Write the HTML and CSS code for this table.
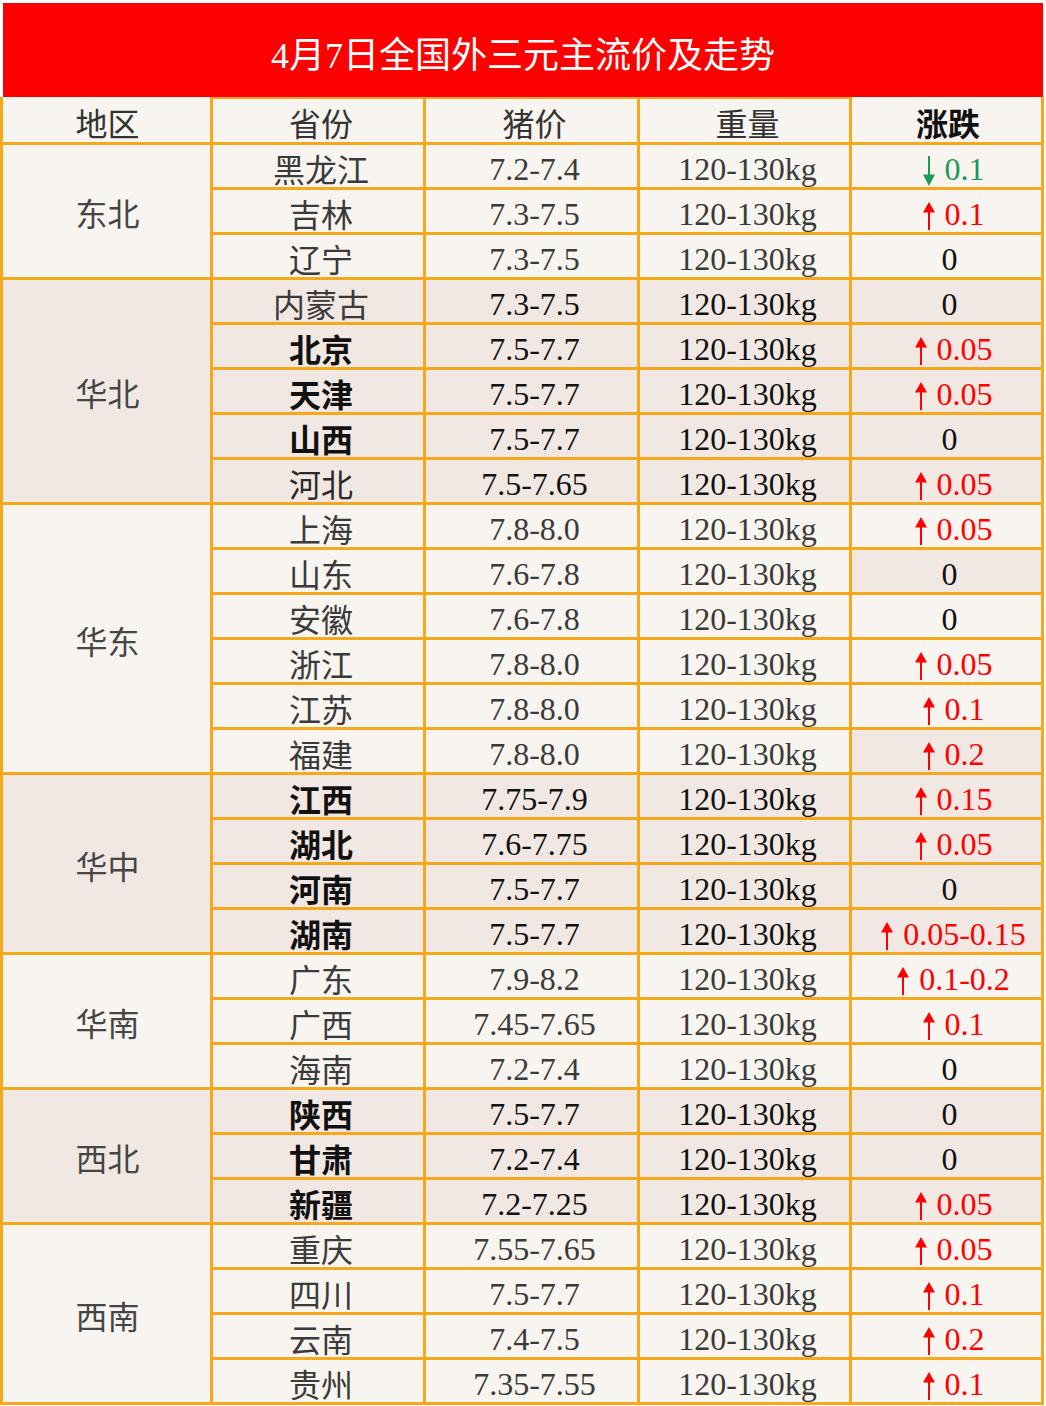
FILE: index.html
```html
<!DOCTYPE html>
<html lang="zh">
<head>
<meta charset="utf-8">
<title>4月7日全国外三元主流价及走势</title>
<link rel="stylesheet" href="styles.css">
</head>
<body>
<div class="title">4月7日全国外三元主流价及走势</div>
<div class="grid">
  <div class="c h first">地区</div>
  <div class="c h top">省份</div>
  <div class="c h top">猪价</div>
  <div class="c h top">重量</div>
  <div class="c h k b">涨跌</div>

  <div class="c region" style="grid-row: span 3">东北</div>
  <div class="c p">黑龙江</div><div class="c">7.2-7.4</div><div class="c">120-130kg</div>
  <div class="c chg dn"><svg class="arr-dn" width="12" height="30" viewBox="0 0 12 30"><path d="M5 0H7V20H5Z M0 18.5H12L6 30Z" fill="currentColor"/></svg><span>0.1</span></div>
  <div class="c p">吉林</div><div class="c">7.3-7.5</div><div class="c">120-130kg</div>
  <div class="c chg up"><svg class="arr" width="12" height="28" viewBox="0 0 12 28"><path d="M6 0L12 10.5H0Z M5 9H7V28H5Z" fill="currentColor"/></svg><span>0.1</span></div>
  <div class="c p">辽宁</div><div class="c">7.3-7.5</div><div class="c">120-130kg</div><div class="c k">0</div>

  <div class="c region d" style="grid-row: span 5">华北</div>
  <div class="c p d">内蒙古</div><div class="c d k">7.3-7.5</div><div class="c d k">120-130kg</div><div class="c d k">0</div>
  <div class="c p d k b">北京</div><div class="c d k">7.5-7.7</div><div class="c d k">120-130kg</div>
  <div class="c d chg up"><svg class="arr" width="12" height="28" viewBox="0 0 12 28"><path d="M6 0L12 10.5H0Z M5 9H7V28H5Z" fill="currentColor"/></svg><span>0.05</span></div>
  <div class="c p d k b">天津</div><div class="c d k">7.5-7.7</div><div class="c d k">120-130kg</div>
  <div class="c d chg up"><svg class="arr" width="12" height="28" viewBox="0 0 12 28"><path d="M6 0L12 10.5H0Z M5 9H7V28H5Z" fill="currentColor"/></svg><span>0.05</span></div>
  <div class="c p d k b">山西</div><div class="c d k">7.5-7.7</div><div class="c d k">120-130kg</div><div class="c d k">0</div>
  <div class="c p d k2">河北</div><div class="c d k">7.5-7.65</div><div class="c d k">120-130kg</div>
  <div class="c d chg up"><svg class="arr" width="12" height="28" viewBox="0 0 12 28"><path d="M6 0L12 10.5H0Z M5 9H7V28H5Z" fill="currentColor"/></svg><span>0.05</span></div>

  <div class="c region" style="grid-row: span 6">华东</div>
  <div class="c p">上海</div><div class="c">7.8-8.0</div><div class="c">120-130kg</div>
  <div class="c chg up"><svg class="arr" width="12" height="28" viewBox="0 0 12 28"><path d="M6 0L12 10.5H0Z M5 9H7V28H5Z" fill="currentColor"/></svg><span>0.05</span></div>
  <div class="c p">山东</div><div class="c">7.6-7.8</div><div class="c">120-130kg</div><div class="c d k">0</div>
  <div class="c p">安徽</div><div class="c">7.6-7.8</div><div class="c">120-130kg</div><div class="c k">0</div>
  <div class="c p">浙江</div><div class="c">7.8-8.0</div><div class="c">120-130kg</div>
  <div class="c chg up"><svg class="arr" width="12" height="28" viewBox="0 0 12 28"><path d="M6 0L12 10.5H0Z M5 9H7V28H5Z" fill="currentColor"/></svg><span>0.05</span></div>
  <div class="c p">江苏</div><div class="c">7.8-8.0</div><div class="c">120-130kg</div>
  <div class="c chg up"><svg class="arr" width="12" height="28" viewBox="0 0 12 28"><path d="M6 0L12 10.5H0Z M5 9H7V28H5Z" fill="currentColor"/></svg><span>0.1</span></div>
  <div class="c p">福建</div><div class="c">7.8-8.0</div><div class="c">120-130kg</div>
  <div class="c d chg up"><svg class="arr" width="12" height="28" viewBox="0 0 12 28"><path d="M6 0L12 10.5H0Z M5 9H7V28H5Z" fill="currentColor"/></svg><span>0.2</span></div>

  <div class="c region d" style="grid-row: span 4">华中</div>
  <div class="c p d k b">江西</div><div class="c d k">7.75-7.9</div><div class="c d k">120-130kg</div>
  <div class="c d chg up"><svg class="arr" width="12" height="28" viewBox="0 0 12 28"><path d="M6 0L12 10.5H0Z M5 9H7V28H5Z" fill="currentColor"/></svg><span>0.15</span></div>
  <div class="c p d k b">湖北</div><div class="c d k">7.6-7.75</div><div class="c d k">120-130kg</div>
  <div class="c d chg up"><svg class="arr" width="12" height="28" viewBox="0 0 12 28"><path d="M6 0L12 10.5H0Z M5 9H7V28H5Z" fill="currentColor"/></svg><span>0.05</span></div>
  <div class="c p d k b">河南</div><div class="c d k">7.5-7.7</div><div class="c d k">120-130kg</div><div class="c d k">0</div>
  <div class="c p d k b">湖南</div><div class="c d k">7.5-7.7</div><div class="c d k">120-130kg</div>
  <div class="c d chg up"><svg class="arr" width="12" height="28" viewBox="0 0 12 28"><path d="M6 0L12 10.5H0Z M5 9H7V28H5Z" fill="currentColor"/></svg><span>0.05-0.15</span></div>

  <div class="c region" style="grid-row: span 3">华南</div>
  <div class="c p">广东</div><div class="c">7.9-8.2</div><div class="c">120-130kg</div>
  <div class="c chg up"><svg class="arr" width="12" height="28" viewBox="0 0 12 28"><path d="M6 0L12 10.5H0Z M5 9H7V28H5Z" fill="currentColor"/></svg><span>0.1-0.2</span></div>
  <div class="c p">广西</div><div class="c">7.45-7.65</div><div class="c">120-130kg</div>
  <div class="c chg up"><svg class="arr" width="12" height="28" viewBox="0 0 12 28"><path d="M6 0L12 10.5H0Z M5 9H7V28H5Z" fill="currentColor"/></svg><span>0.1</span></div>
  <div class="c p">海南</div><div class="c">7.2-7.4</div><div class="c">120-130kg</div><div class="c k">0</div>

  <div class="c region d" style="grid-row: span 3">西北</div>
  <div class="c p d k b">陕西</div><div class="c d k">7.5-7.7</div><div class="c d k">120-130kg</div><div class="c d k">0</div>
  <div class="c p d k b">甘肃</div><div class="c d k">7.2-7.4</div><div class="c d k">120-130kg</div><div class="c d k">0</div>
  <div class="c p d k b">新疆</div><div class="c d k">7.2-7.25</div><div class="c d k">120-130kg</div>
  <div class="c d chg up"><svg class="arr" width="12" height="28" viewBox="0 0 12 28"><path d="M6 0L12 10.5H0Z M5 9H7V28H5Z" fill="currentColor"/></svg><span>0.05</span></div>

  <div class="c region" style="grid-row: span 4">西南</div>
  <div class="c p">重庆</div><div class="c">7.55-7.65</div><div class="c">120-130kg</div>
  <div class="c chg up"><svg class="arr" width="12" height="28" viewBox="0 0 12 28"><path d="M6 0L12 10.5H0Z M5 9H7V28H5Z" fill="currentColor"/></svg><span>0.05</span></div>
  <div class="c p">四川</div><div class="c">7.5-7.7</div><div class="c">120-130kg</div>
  <div class="c chg up"><svg class="arr" width="12" height="28" viewBox="0 0 12 28"><path d="M6 0L12 10.5H0Z M5 9H7V28H5Z" fill="currentColor"/></svg><span>0.1</span></div>
  <div class="c p">云南</div><div class="c">7.4-7.5</div><div class="c">120-130kg</div>
  <div class="c chg up"><svg class="arr" width="12" height="28" viewBox="0 0 12 28"><path d="M6 0L12 10.5H0Z M5 9H7V28H5Z" fill="currentColor"/></svg><span>0.2</span></div>
  <div class="c p">贵州</div><div class="c">7.35-7.55</div><div class="c">120-130kg</div>
  <div class="c chg up"><svg class="arr" width="12" height="28" viewBox="0 0 12 28"><path d="M6 0L12 10.5H0Z M5 9H7V28H5Z" fill="currentColor"/></svg><span>0.1</span></div>
</div>
</body>
</html>
```

FILE: styles.css
```css
html, body {
  margin: 0;
  padding: 0;
  background: #ffffff;
}

body {
  width: 1046px;
  height: 1406px;
  overflow: hidden;
  font-family: "Liberation Serif", "Noto Sans CJK SC", serif;
}

.title {
  margin: 3px 0 0 3px;
  width: 1040px;
  height: 94px;
  box-sizing: border-box;
  padding-top: 12px;
  background: #ff0000;
  color: #ffffff;
  font-size: 36px;
  line-height: 36px;
  display: flex;
  align-items: center;
  justify-content: center;
}

.grid {
  display: grid;
  width: 1044px;
  box-sizing: border-box;
  padding: 0 3px 3px 3px;
  grid-template-columns: 207px 210px 211px 209px 189px;
  grid-template-rows: 45px repeat(28, 42px);
  gap: 3px;
  background: #f6a81a;
}

.c {
  background: #f8f4f0;
  color: #3a3a3a;
  font-size: 32px;
  line-height: 32px;
  display: flex;
  align-items: flex-end;
  justify-content: center;
  padding-bottom: 2px;
  padding-left: 6px;
  white-space: nowrap;
  box-sizing: border-box;
}

.h {
  color: #333333;
  padding-bottom: 1px;
  padding-left: 3px;
}

.first {
  padding-left: 2px;
}

.top {
  box-shadow: inset 0 2px 0 #f6a81a;
  padding-left: 6px;
}

.p {
  padding-bottom: 0;
}

.d {
  background: #f2e8e3;
}

.k {
  color: #111111;
}

.k2 {
  color: #2a2a2a;
}

.b {
  font-weight: 700;
}

.region {
  align-items: center;
  padding-top: 8px;
  padding-bottom: 0;
  padding-left: 2px;
  color: #454545;
}

.chg {
  padding-left: 14px;
  align-items: flex-end;
}

.chg span {
  display: inline-block;
}

.up {
  color: #ff0000;
}

.dn {
  color: #1a9b57;
}

.arr {
  display: block;
  flex: none;
  margin-right: 10px;
  margin-bottom: 0;
}

.arr-dn {
  display: block;
  flex: none;
  margin-right: 10px;
  margin-bottom: -1px;
}
```
